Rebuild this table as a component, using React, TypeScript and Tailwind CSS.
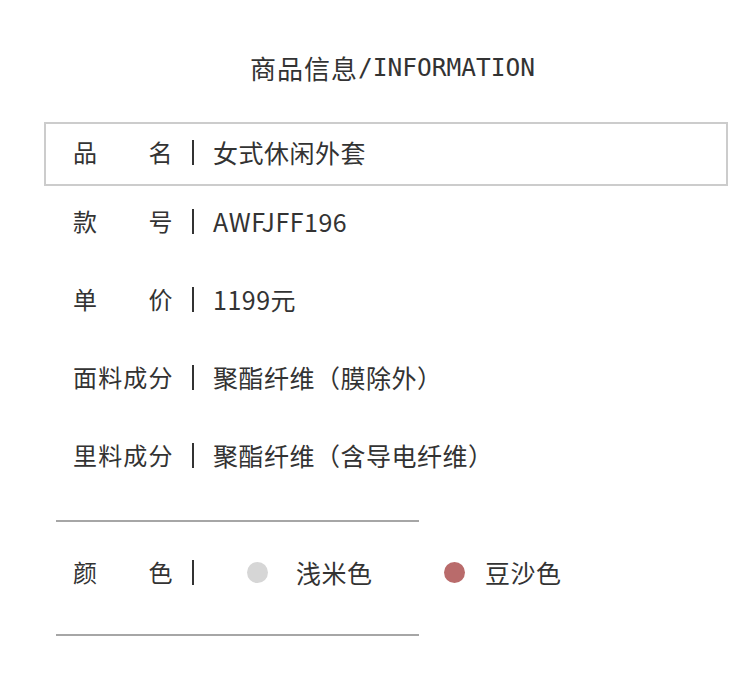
const cjk = { fontFamily: '"Noto Sans CJK SC", "Noto Sans", sans-serif' };

interface Row {
  label: string;
  value: string;
}

const rows: Row[] = [
  { label: "款号", value: "AWFJFF196" },
  { label: "单价", value: "1199元" },
  { label: "面料成分", value: "聚酯纤维（膜除外）" },
  { label: "里料成分", value: "聚酯纤维（含导电纤维）" },
];

const colors = [
  { name: "浅米色", swatch: "bg-[#d6d6d6]", gap: "ml-[28px]" },
  { name: "豆沙色", swatch: "bg-[#b96b6b]", gap: "ml-[20px]" },
];

function Label({ text }: { text: string }) {
  return (
    <div className="flex w-[100px] justify-between text-[24px]">
      {text.split("").map((ch, i) => (
        <span key={i}>{ch}</span>
      ))}
    </div>
  );
}

function Divider() {
  return <span className="mx-[19px] h-[25px] w-[2px] shrink-0 bg-[#333333]" />;
}

export default function App() {
  return (
    <div
      className="h-[695px] w-[750px] overflow-hidden bg-white text-[25px] text-[#333333]"
      style={cjk}
    >
      {/* Title */}
      <h1 className="mt-[50px] flex h-[36px] items-center pl-[250px] text-[26px] font-normal leading-none tracking-[1px]">
        <span>商品信息</span>
        <span
          className="text-[24.5px] tracking-normal"
          style={{ fontFamily: '"DejaVu Sans Mono", monospace' }}
        >
          /INFORMATION
        </span>
      </h1>

      {/* Highlighted first row */}
      <div className="ml-[44px] mt-[36px] flex h-[64px] w-[684px] items-center border-2 border-[#cccccc] pb-[4px] pl-[27px] leading-none tracking-[0.5px]">
        <Label text="品名" />
        <Divider />
        <span>女式休闲外套</span>
      </div>

      <div className="-mt-[1px]">
        {rows.map((row) => (
          <div
            key={row.label}
            className="flex h-[78px] items-center pb-[6px] pl-[73px] leading-none tracking-[0.5px]"
          >
            <Label text={row.label} />
            <Divider />
            <span>{row.value}</span>
          </div>
        ))}
      </div>

      <div className="ml-[56px] mt-[23px] h-[2px] w-[363px] bg-[#a6a6a6]" />

      {/* Colours */}
      <div className="flex h-[100px] items-center pl-[73px] leading-none tracking-[0.5px]">
        <Label text="颜色" />
        <span className="ml-[19px] h-[25px] w-[2px] shrink-0 bg-[#333333]" />
        <div className="ml-[53px] flex">
          {colors.map((c) => (
            <div key={c.name} className="flex w-[197px] items-center">
              <span className={`h-[21px] w-[21px] shrink-0 rounded-full ${c.swatch}`} />
              <span className={c.gap}>{c.name}</span>
            </div>
          ))}
        </div>
      </div>

      <div className="ml-[56px] mt-[12px] h-[2px] w-[363px] bg-[#a6a6a6]" />
    </div>
  );
}
